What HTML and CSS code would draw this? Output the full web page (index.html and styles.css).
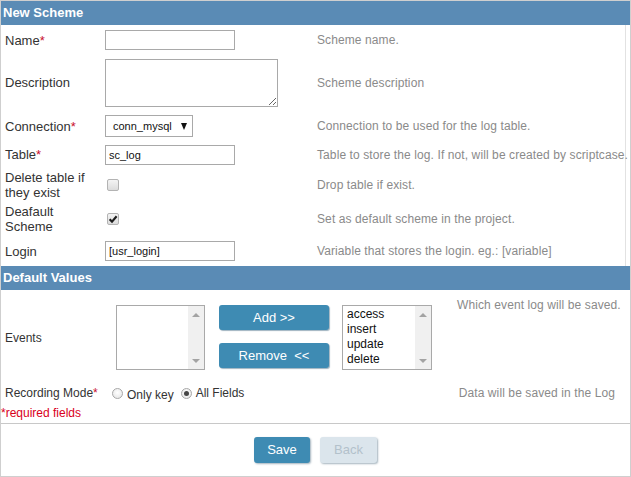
FILE: index.html
```html
<!DOCTYPE html>
<html>
<head>
<meta charset="utf-8">
<link rel="stylesheet" href="styles.css">
</head>
<body>
<div class="panel">
  <div class="hdr">New Scheme</div>
  <div class="section">
    <div class="row h30">
      <div class="lbl">Name<span class="req">*</span></div>
      <div class="fld"><span class="input"></span></div>
      <div class="help">Scheme name.</div>
    </div>
    <div class="row h55">
      <div class="lbl">Description</div>
      <div class="fld"><textarea class="area"></textarea></div>
      <div class="help">Scheme description</div>
    </div>
    <div class="row h32">
      <div class="lbl">Connection<span class="req">*</span></div>
      <div class="fld"><span class="select"><span class="sel-text">conn_mysql</span><span class="caret"></span></span></div>
      <div class="help">Connection to be used for the log table.</div>
    </div>
    <div class="row h25">
      <div class="lbl">Table<span class="req">*</span></div>
      <div class="fld"><span class="input">sc_log</span></div>
      <div class="help">Table to store the log. If not, will be created by scriptcase.</div>
    </div>
    <div class="row h35">
      <div class="lbl two">Delete table if<br>they exist</div>
      <div class="fld"><span class="check"></span></div>
      <div class="help">Drop table if exist.</div>
    </div>
    <div class="row h34">
      <div class="lbl two">Deafault<br>Scheme</div>
      <div class="fld"><span class="check"><svg width="10" height="10" viewBox="0 0 10 10"><path d="M1.6 5.2 L4 7.6 L8.6 2.2" fill="none" stroke="#1d1d1d" stroke-width="2.1"/></svg></span></div>
      <div class="help">Set as default scheme in the project.</div>
    </div>
    <div class="row h30">
      <div class="lbl">Login</div>
      <div class="fld"><span class="input">[usr_login]</span></div>
      <div class="help">Variable that stores the login. eg.: [variable]</div>
    </div>
  </div>
  <div class="hdr">Default Values</div>
  <div class="events">
    <div class="ev-label">Events</div>
    <div class="listbox lb1">
      <div class="items"></div>
      <div class="sbar"><span class="up"></span><span class="down"></span></div>
    </div>
    <div class="btns">
      <span class="btn">Add &gt;&gt;</span>
      <span class="btn">Remove&nbsp; &lt;&lt;</span>
    </div>
    <div class="listbox lb2">
      <div class="items">
        <div>access</div>
        <div>insert</div>
        <div>update</div>
        <div>delete</div>
      </div>
      <div class="sbar"><span class="up"></span><span class="down"></span></div>
    </div>
    <div class="help ev-help">Which event log will be saved.</div>
  </div>
  <div class="recording">
    <div class="rec-label">Recording Mode<span class="req">*</span></div>
    <span class="radio"></span><span class="opt opt1">Only key</span>
    <span class="radio on"></span><span class="opt">All Fields</span>
    <div class="help rec-help">Data will be saved in the Log</div>
  </div>
  <div class="required">*required fields</div>
  <div class="footer">
    <span class="fbtn save">Save</span>
    <span class="fbtn back">Back</span>
  </div>
</div>
</body>
</html>
```
FILE: styles.css
```css
body {
  margin: 0;
  font-family: "Liberation Sans", Arial, sans-serif;
  font-size: 12px;
  color: #333;
  background: #fff;
}
.panel {
  width: 631px;
  height: 477px;
  box-sizing: border-box;
  border: 1px solid #cfcfcf;
  display: flex;
  flex-direction: column;
}
.hdr {
  height: 24px;
  flex: none;
  background: #5a8bb5;
  color: #fff;
  font-weight: bold;
  font-size: 13px;
  line-height: 24px;
  padding-left: 2px;
}
.section {
  margin-right: 4px;
  border-right: 1px solid #e2e2e2;
}
.row {
  display: grid;
  grid-template-columns: 100px 212px 1fr;
  align-items: center;
  padding-left: 4px;
}
.h25 { height: 25px; }
.h30 { height: 30px; }
.h32 { height: 32px; }
.h34 { height: 34px; }
.h35 { height: 35px; }
.h55 { height: 55px; }
.lbl {
  font-size: 13px;
  color: #333;
  white-space: nowrap;
}
.lbl.two { line-height: 15px; }
.req { color: #c8102e; }
.fld { display: flex; align-items: center; }
.help {
  color: #8a8a8a;
  font-size: 12px;
  letter-spacing: 0.1px;
  white-space: nowrap;
}
.input {
  display: block;
  box-sizing: border-box;
  width: 130px;
  height: 20px;
  border: 1px solid #a9a9a9;
  padding-left: 3px;
  line-height: 18px;
  font-size: 11px;
  color: #111;
}
.area {
  display: block;
  box-sizing: border-box;
  width: 173px;
  height: 48px;
  margin: 0;
  border: 1px solid #a9a9a9;
  padding: 2px;
  font-family: inherit;
}
.select {
  box-sizing: border-box;
  width: 88px;
  height: 22px;
  border: 1px solid #a9a9a9;
  display: flex;
  align-items: center;
  padding-left: 7px;
  padding-right: 5px;
  font-size: 11px;
  color: #111;
}
.sel-text { flex: 1; }
.caret {
  width: 0;
  height: 0;
  border-left: 3.5px solid transparent;
  border-right: 3.5px solid transparent;
  border-top: 7px solid #111;
}
.check {
  box-sizing: border-box;
  width: 12px;
  height: 12px;
  margin-left: 2px;
  border: 1px solid #b3b3b3;
  border-radius: 2px;
  background: linear-gradient(#f4f4f4, #dcdcdc);
  display: flex;
  align-items: center;
  justify-content: center;
}
.check svg { display: block; }

/* events */
.events {
  display: flex;
  align-items: flex-start;
  padding: 15px 0 10px 4px;
  height: 90px;
  box-sizing: border-box;
}
.ev-label {
  width: 111px;
  align-self: center;
  font-size: 12px;
}
.listbox {
  box-sizing: border-box;
  height: 65px;
  border: 1px solid #a9a9a9;
  display: flex;
}
.lb1 { width: 89px; }
.lb2 { width: 90px; margin-left: 13px; }
.items {
  flex: 1;
  padding: 1px 0 0 4px;
  line-height: 15px;
  font-size: 12px;
  color: #111;
}
.sbar {
  width: 16px;
  background: #f0f0f0;
  display: flex;
  flex-direction: column;
  justify-content: space-between;
  align-items: center;
  padding: 7px 0 6px;
  box-sizing: border-box;
}
.up, .down {
  width: 0;
  height: 0;
  border-left: 4px solid transparent;
  border-right: 4px solid transparent;
}
.up { border-bottom: 4px solid #a3a3a3; }
.down { border-top: 4px solid #a3a3a3; }
.btns {
  margin-left: 14px;
  width: 110px;
  display: flex;
  flex-direction: column;
  gap: 13px;
}
.btn {
  height: 25px;
  line-height: 25px;
  text-align: center;
  background: #3e8bb3;
  color: #fff;
  font-size: 13px;
  border-radius: 3px;
  box-shadow: 1px 1px 1px #9fb3c0;
}
.ev-help {
  margin-left: 25px;
  margin-top: -7px;
  line-height: 15px;
}

/* recording */
.recording {
  height: 26px;
  display: flex;
  align-items: center;
  padding-left: 4px;
  font-size: 12px;
}
.rec-label { width: 107px; }
.radio {
  box-sizing: border-box;
  width: 11px;
  height: 11px;
  border: 1px solid #a8a8a8;
  border-radius: 50%;
  background: radial-gradient(circle at 50% 40%, #fff, #e2e2e2);
  display: flex;
  align-items: center;
  justify-content: center;
}
.radio.on::after {
  content: "";
  width: 5px;
  height: 5px;
  border-radius: 50%;
  background: #454545;
}
.opt {
  margin-left: 4px;
  color: #333;
}
.opt1 { margin-right: 7px; margin-top: 3px; }
.rec-help { margin-left: auto; margin-right: 15px; }

.required {
  color: #d9001b;
  font-size: 12px;
  line-height: 15px;
  box-sizing: border-box;
  border-bottom: 1px solid #c8c8c8;
  height: 18px;
}
.footer {
  flex: 1;
  display: flex;
  justify-content: center;
  align-items: flex-start;
  gap: 10px;
  padding-top: 13px;
}
.fbtn {
  height: 26px;
  line-height: 26px;
  text-align: center;
  font-size: 13px;
  border-radius: 3px;
  box-shadow: 1px 1px 2px #a5b4be;
}
.save {
  width: 56px;
  background: #3e8bb3;
  color: #fff;
}
.back {
  width: 57px;
  background: #dbe5ec;
  color: #b3c1cb;
}
```
